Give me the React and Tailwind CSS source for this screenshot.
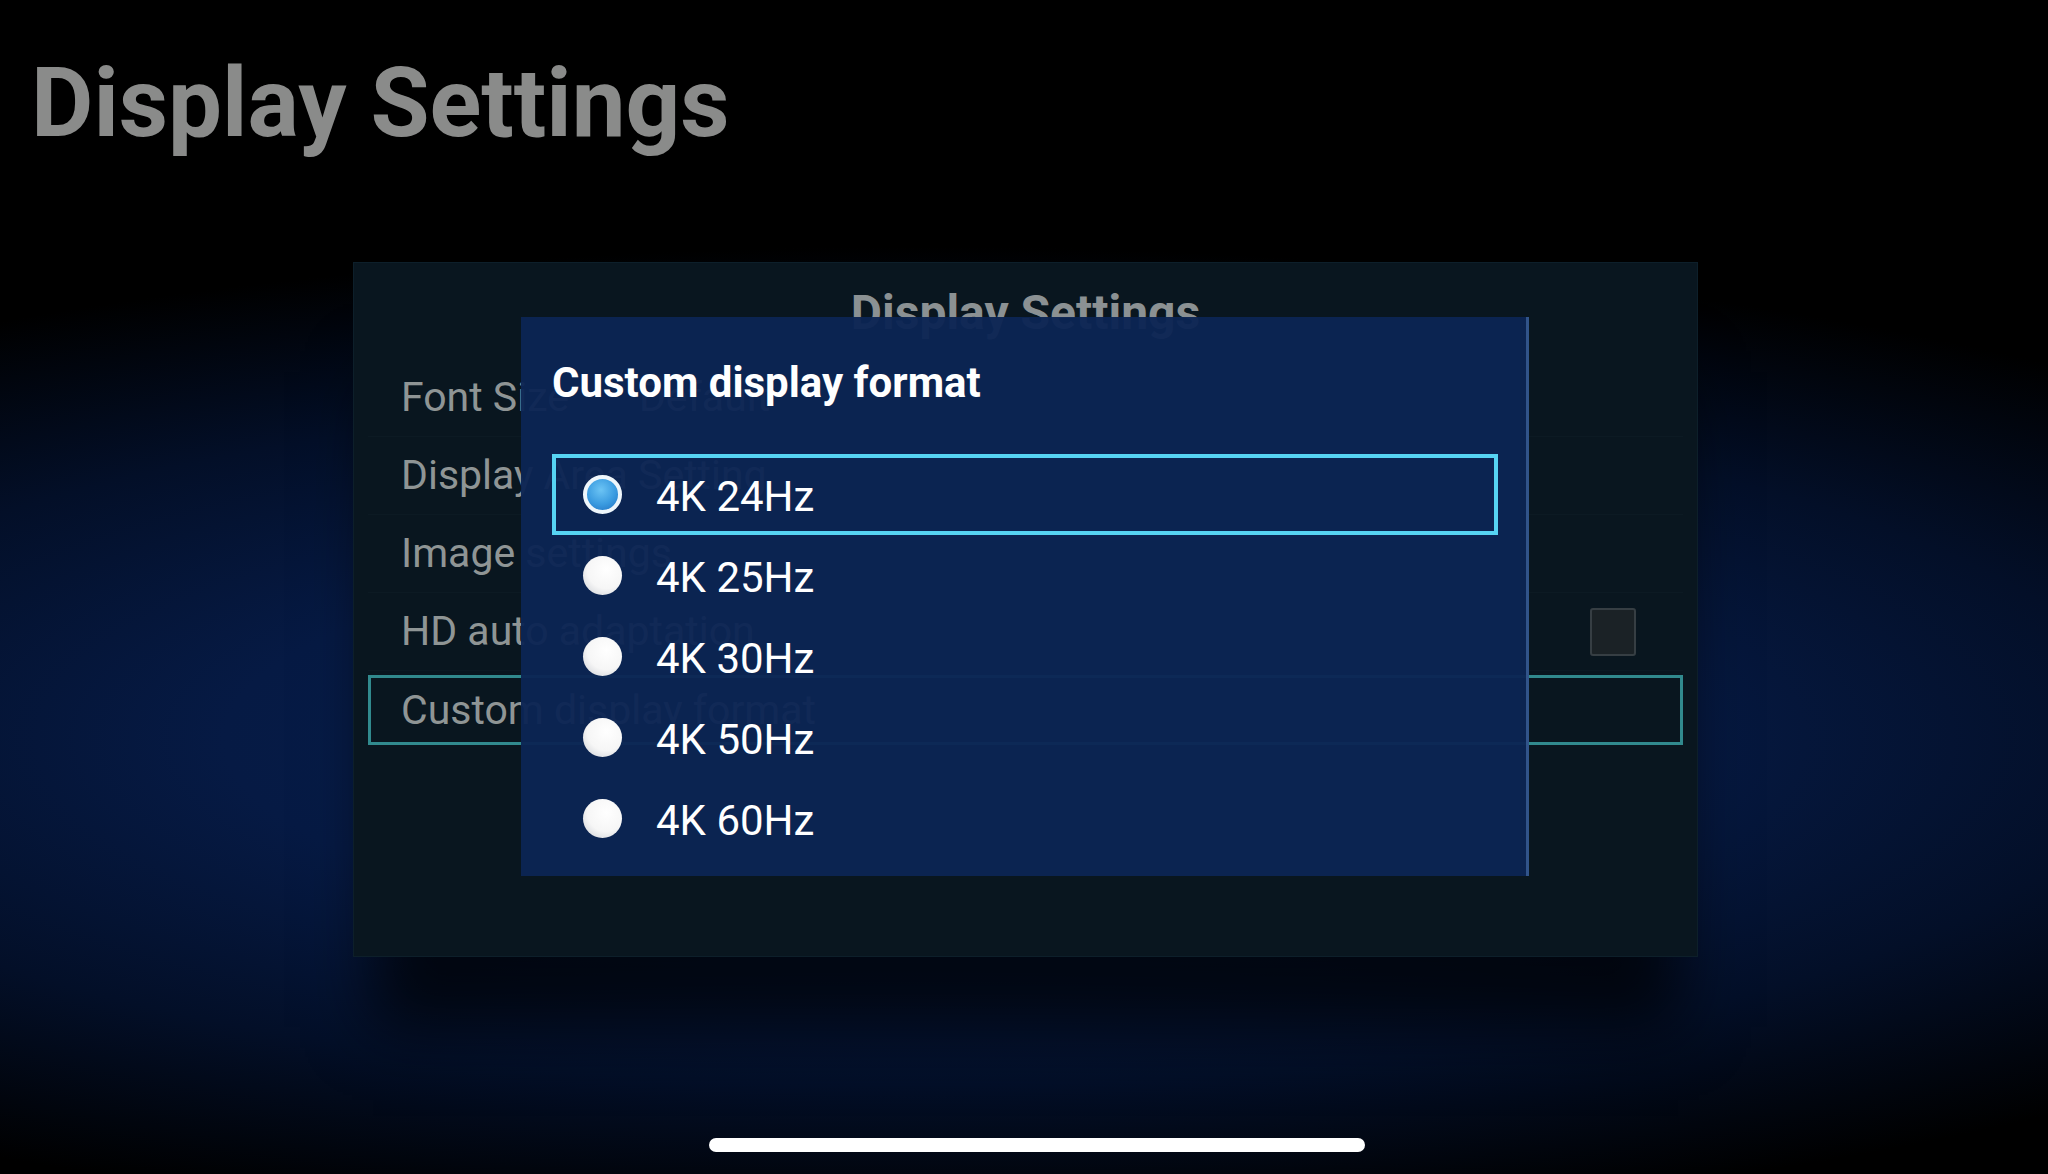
import React from 'react';

const menu = [
  { label: 'Font Size', value: 'Default' },
  { label: 'Display Area Setting' },
  { label: 'Image settings' },
  { label: 'HD auto adaptation', checkbox: true },
  { label: 'Custom display format', focused: true },
];

const formats = ['4K 24Hz', '4K 25Hz', '4K 30Hz', '4K 50Hz', '4K 60Hz'];

const Radio = ({ checked }) =>
  checked ? (
    <span className="w-[39px] h-[39px] rounded-full border-[4px] border-[#eef6fb] bg-[radial-gradient(circle_at_45%_35%,#6cc4f4_0%,#3a9be0_55%,#1f6fc0_100%)] shrink-0" />
  ) : (
    <span className="w-[39px] h-[39px] rounded-full bg-[radial-gradient(circle_at_60%_35%,#ffffff_0%,#f6f6f6_55%,#c9ccd2_100%)] shrink-0" />
  );

const App = () => {
  const selected = 0;

  return (
    <div
      className="relative w-[2048px] h-[1174px] overflow-hidden flex flex-col bg-[radial-gradient(ellipse_85%_42%_at_45%_63%,#07204f_0%,#061a44_40%,#030f28_70%,#000_100%)]"
      style={{ fontFamily: 'Roboto, "Noto Sans", sans-serif' }}
    >
      {/* Page title */}
      <h1 className="mt-[55px] ml-[31px] text-[96px] font-bold leading-none text-[#8a8b8a]">
        Display Settings
      </h1>

      {/* Settings panel */}
      <div className="ml-[353px] mt-[111px] w-[1345px] h-[695px] bg-[#09161f] border border-[#0d1f2a] shadow-[0_90px_60px_-20px_rgba(0,0,0,0.7)] flex flex-col">
        <h2 className="pt-[26px] text-center text-[48px] font-bold leading-none text-[#8b9193]">
          Display Settings
        </h2>

        <div className="mt-[22px] px-[14px] flex flex-col">
          {menu.map((item, i) => (
            <div
              key={item.label}
              className={`h-[78px] py-[4px] ${i < menu.length - 1 ? 'border-b border-[#0c1a23]' : ''}`}
            >
              <div
                className={`h-full flex items-center pl-[30px] pr-[44px] border-[3px] ${
                  item.focused ? 'border-[#318a8e]' : 'border-transparent'
                }`}
              >
                <span className="text-[41px] leading-none text-[#8f9595]">{item.label}</span>
                {item.value && (
                  <span className="ml-[70px] text-[41px] leading-none text-[#8f9595]">{item.value}</span>
                )}
                {item.checkbox && (
                  <span className="ml-auto w-[46px] h-[48px] rounded-[3px] border-2 border-[#363e43] bg-[#1b2226]" />
                )}
              </div>
            </div>
          ))}
        </div>
      </div>

      {/* Dialog */}
      <div className="absolute left-[521px] top-[317px] w-[1008px] h-[559px] bg-[rgba(12,37,84,0.955)] border-r-[3px] border-[#31548a] pt-[45px] pl-[31px] pr-[28px]">
        <h3 className="text-[42px] font-bold leading-none text-white">Custom display format</h3>

        <div className="mt-[50px] flex flex-col">
          {formats.map((f, i) => (
            <div
              key={f}
              className={`h-[81px] flex items-center pl-[27px] border-[4px] ${
                i === selected ? 'border-[#56d3f2]' : 'border-transparent'
              }`}
            >
              <Radio checked={i === selected} />
              <span className="ml-[34px] mt-[5px] text-[42px] leading-none text-white">{f}</span>
            </div>
          ))}
        </div>
      </div>

      {/* Home indicator */}
      <div className="mt-auto mb-[22px] ml-[709px] w-[656px] h-[14px] rounded-full bg-white" />
    </div>
  );
};

export default App;
